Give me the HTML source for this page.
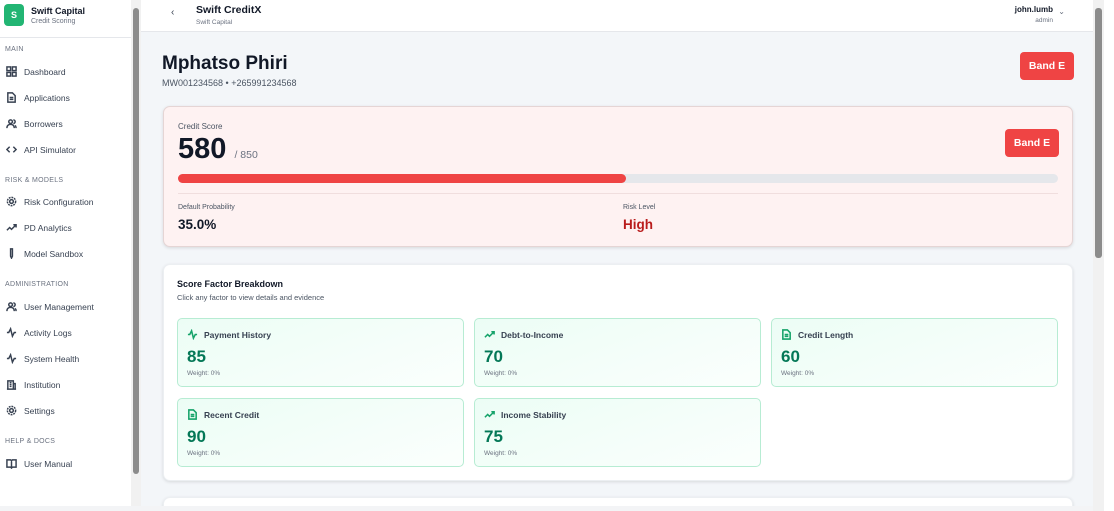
<!DOCTYPE html>
<html style="width:1114px;height:511px;overflow:hidden"><head><meta charset="utf-8"><style>
*{box-sizing:border-box;margin:0;padding:0}
body{width:1114px;height:511px;overflow:hidden;font-family:"Liberation Sans",sans-serif;background:#f3f6f9;position:relative;color:#111827}
.sb{position:absolute;left:0;top:0;width:131px;height:511px;background:#fff}
.sbs{position:absolute;left:131px;top:0;width:10px;height:511px;background:#f1f1f1}
.sbs i{position:absolute;left:2px;top:8px;width:6px;height:466px;background:#8c8c8c;border-radius:3px}
.logo{position:absolute;left:4px;top:4px;width:20px;height:22px;background:#22b573;border-radius:4px;color:#fff;font-weight:bold;font-size:9px;text-align:center;line-height:22px}
.bt{position:absolute;left:31px;top:6px;font-size:9px;font-weight:bold}
.bs{position:absolute;left:31px;top:18px;font-size:7px;color:#6b7280}
.sec{position:absolute;left:5px;font-size:7px;color:#6b7280;letter-spacing:.3px}
.it{position:absolute;left:6px;font-size:8.5px;color:#374151;display:flex;align-items:center;gap:7px}
.it svg{width:11px;height:11px;stroke:#374151;fill:none;stroke-width:1.6}
.hdr{position:absolute;left:141px;top:0;width:952px;height:32px;background:#fff;border-bottom:1px solid #e5e7eb}
.msb{position:absolute;left:1093px;top:0;width:11px;height:511px;background:#f1f1f1}
.msb i{position:absolute;left:2px;top:9px;width:7px;height:75px;background:#8c8c8c;border-radius:3px}
.rr{position:absolute;left:1104px;top:0;width:10px;height:511px;background:#fff}
.btn{position:absolute;background:#ef4444;color:#fff;font-weight:bold;font-size:10.5px;border-radius:4px;text-align:center}
.card{position:absolute;left:163px;width:910px;border-radius:7px;box-shadow:0 1px 3px rgba(0,0,0,.12)}
.f{position:absolute;width:287px;height:69px;border:1px solid #b7ecd3;border-radius:5px;background:linear-gradient(160deg,#ecfdf5,#fbfffd)}
.f .t{position:absolute;left:9px;top:10px;font-size:8.5px;font-weight:bold;color:#374151;display:flex;align-items:center;gap:6px}
.f .t svg{width:11px;height:11px;stroke:#16a36a;fill:none;stroke-width:1.7}
.f .v{position:absolute;left:9px;top:28px;font-size:17px;font-weight:bold;color:#047857}
.f .w{position:absolute;left:9px;top:51px;font-size:6.5px;color:#6b7280}
</style></head><body>
<div class="sb">
<div class="logo">S</div><div class="bt">Swift Capital</div><div class="bs">Credit Scoring</div>
<div style="position:absolute;left:0;top:37px;width:131px;border-top:1px solid #e5e7eb"></div>
<div class="sec" style="top:46px">MAIN</div>
<div class="it" style="top:66px"><svg viewBox="0 0 12 12"><rect x="1" y="1" width="4" height="4"/><rect x="7" y="1" width="4" height="4"/><rect x="1" y="7" width="4" height="4"/><rect x="7" y="7" width="4" height="4"/></svg>Dashboard</div>
<div class="it" style="top:92px"><svg viewBox="0 0 12 12"><path d="M2 1h5l3 3v7H2z M4 6h4M4 8h4"/></svg>Applications</div>
<div class="it" style="top:118px"><svg viewBox="0 0 12 12"><circle cx="5" cy="4" r="2"/><path d="M1 11c0-3 2-4 4-4s4 1 4 4M8 2a2 2 0 010 4M10 8c1 1 1 2 1 3"/></svg>Borrowers</div>
<div class="it" style="top:144px"><svg viewBox="0 0 12 12"><path d="M4 3L1 6l3 3M8 3l3 3-3 3"/></svg>API Simulator</div>
<div class="sec" style="top:177px">RISK &amp; MODELS</div>
<div class="it" style="top:196px"><svg viewBox="0 0 12 12"><circle cx="6" cy="6" r="2"/><circle cx="6" cy="6" r="4.5" stroke-dasharray="2 1"/></svg>Risk Configuration</div>
<div class="it" style="top:222px"><svg viewBox="0 0 12 12"><path d="M1 9l3-3 2 2 5-5M8 3h3v3"/></svg>PD Analytics</div>
<div class="it" style="top:248px"><svg viewBox="0 0 12 12"><path d="M5 1h2v8l-1 2-1-2z"/></svg>Model Sandbox</div>
<div class="sec" style="top:281px">ADMINISTRATION</div>
<div class="it" style="top:301px"><svg viewBox="0 0 12 12"><circle cx="5" cy="4" r="2"/><path d="M1 11c0-3 2-4 4-4s4 1 4 4M8 2a2 2 0 010 4M10 8c1 1 1 2 1 3"/></svg>User Management</div>
<div class="it" style="top:327px"><svg viewBox="0 0 12 12"><path d="M1 6h2l2-4 2 8 2-4h2"/></svg>Activity Logs</div>
<div class="it" style="top:353px"><svg viewBox="0 0 12 12"><path d="M1 6h2l2-4 2 8 2-4h2"/></svg>System Health</div>
<div class="it" style="top:379px"><svg viewBox="0 0 12 12"><path d="M2 11V2h6v9M8 5h2v6M1 11h10M4 4h2M4 6h2M4 8h2"/></svg>Institution</div>
<div class="it" style="top:405px"><svg viewBox="0 0 12 12"><circle cx="6" cy="6" r="2"/><circle cx="6" cy="6" r="4.5" stroke-dasharray="2 1"/></svg>Settings</div>
<div class="sec" style="top:438px">HELP &amp; DOCS</div>
<div class="it" style="top:458px"><svg viewBox="0 0 12 12"><path d="M1 2h4l1 1 1-1h4v8H7l-1 1-1-1H1zM6 3v8"/></svg>User Manual</div>
</div>
<div class="sbs"><i></i></div>
<div class="hdr">
<div style="position:absolute;left:30px;top:7px;font-size:10px;color:#374151">‹</div>
<div style="position:absolute;left:55px;top:4px;font-size:10.5px;font-weight:bold">Swift CreditX</div>
<div style="position:absolute;left:55px;top:19px;font-size:6.5px;color:#6b7280">Swift Capital</div>
<div style="position:absolute;right:40px;top:5px;font-size:8px;font-weight:bold;text-align:right">john.lumb<div style="font-size:6.5px;color:#6b7280;font-weight:normal;margin-top:3px">admin</div></div>
<div style="position:absolute;right:28px;top:7px;font-size:8px;color:#6b7280">⌄</div>
</div>
<div style="position:absolute;left:162px;top:53px;font-size:19px;font-weight:bold">Mphatso Phiri</div>
<div style="position:absolute;left:162px;top:78px;font-size:9px;color:#4b5563">MW001234568 • +265991234568</div>
<div class="btn" style="left:1020px;top:52px;width:54px;height:28px;line-height:28px">Band E</div>
<div class="card" style="top:106px;height:141px;background:#fef2f2;border:1px solid #e5d5d5">
<div style="position:absolute;left:14px;top:15px;font-size:8px;color:#4b5563">Credit Score</div>
<div style="position:absolute;left:14px;top:26px;font-size:29px;font-weight:bold">580 <span style="font-size:10.5px;color:#6b7280;font-weight:normal">/ 850</span></div>
<div class="btn" style="left:841px;top:22px;width:54px;height:28px;line-height:28px">Band E</div>
<div style="position:absolute;left:14px;top:67px;width:880px;height:9px;background:#e5e7eb;border-radius:5px"><div style="width:448px;height:9px;background:#ef4444;border-radius:5px"></div></div>
<div style="position:absolute;left:14px;top:86px;width:880px;border-top:1px solid #f0dede"></div>
<div style="position:absolute;left:14px;top:97px;font-size:7px;color:#4b5563">Default Probability</div>
<div style="position:absolute;left:14px;top:110px;font-size:13.5px;font-weight:bold">35.0%</div>
<div style="position:absolute;left:459px;top:97px;font-size:7px;color:#4b5563">Risk Level</div>
<div style="position:absolute;left:459px;top:110px;font-size:13.5px;font-weight:bold;color:#b91c1c">High</div>
</div>
<div class="card" style="top:264px;height:217px;background:#fff;border:1px solid #eceff2">
<div style="position:absolute;left:13px;top:14px;font-size:9px;font-weight:bold">Score Factor Breakdown</div>
<div style="position:absolute;left:13px;top:28px;font-size:7.5px;color:#4b5563">Click any factor to view details and evidence</div>
</div>
<div class="f" style="left:177px;top:318px"><div class="t"><svg viewBox="0 0 12 12"><path d="M1 6h2l2-4 2 8 2-4h2"/></svg>Payment History</div><div class="v">85</div><div class="w">Weight: 0%</div></div>
<div class="f" style="left:474px;top:318px"><div class="t"><svg viewBox="0 0 12 12"><path d="M1 9l3-3 2 2 5-5M8 3h3v3"/></svg>Debt-to-Income</div><div class="v">70</div><div class="w">Weight: 0%</div></div>
<div class="f" style="left:771px;top:318px"><div class="t"><svg viewBox="0 0 12 12"><path d="M2 1h5l3 3v7H2z M4 6h4M4 8h4"/></svg>Credit Length</div><div class="v">60</div><div class="w">Weight: 0%</div></div>
<div class="f" style="left:177px;top:398px"><div class="t"><svg viewBox="0 0 12 12"><path d="M2 1h5l3 3v7H2z M4 6h4M4 8h4"/></svg>Recent Credit</div><div class="v">90</div><div class="w">Weight: 0%</div></div>
<div class="f" style="left:474px;top:398px"><div class="t"><svg viewBox="0 0 12 12"><path d="M1 9l3-3 2 2 5-5M8 3h3v3"/></svg>Income Stability</div><div class="v">75</div><div class="w">Weight: 0%</div></div>
<div class="card" style="top:497px;height:12px;background:#fff;border:1px solid #eceff2;border-bottom:none;border-radius:7px 7px 0 0"></div>
<div style="position:absolute;left:0;top:506px;width:1114px;height:5px;background:#f3f4f6"></div>
<div class="msb"><i style="height:250px;top:8px"></i></div>
<div class="rr"></div>
</body></html>
